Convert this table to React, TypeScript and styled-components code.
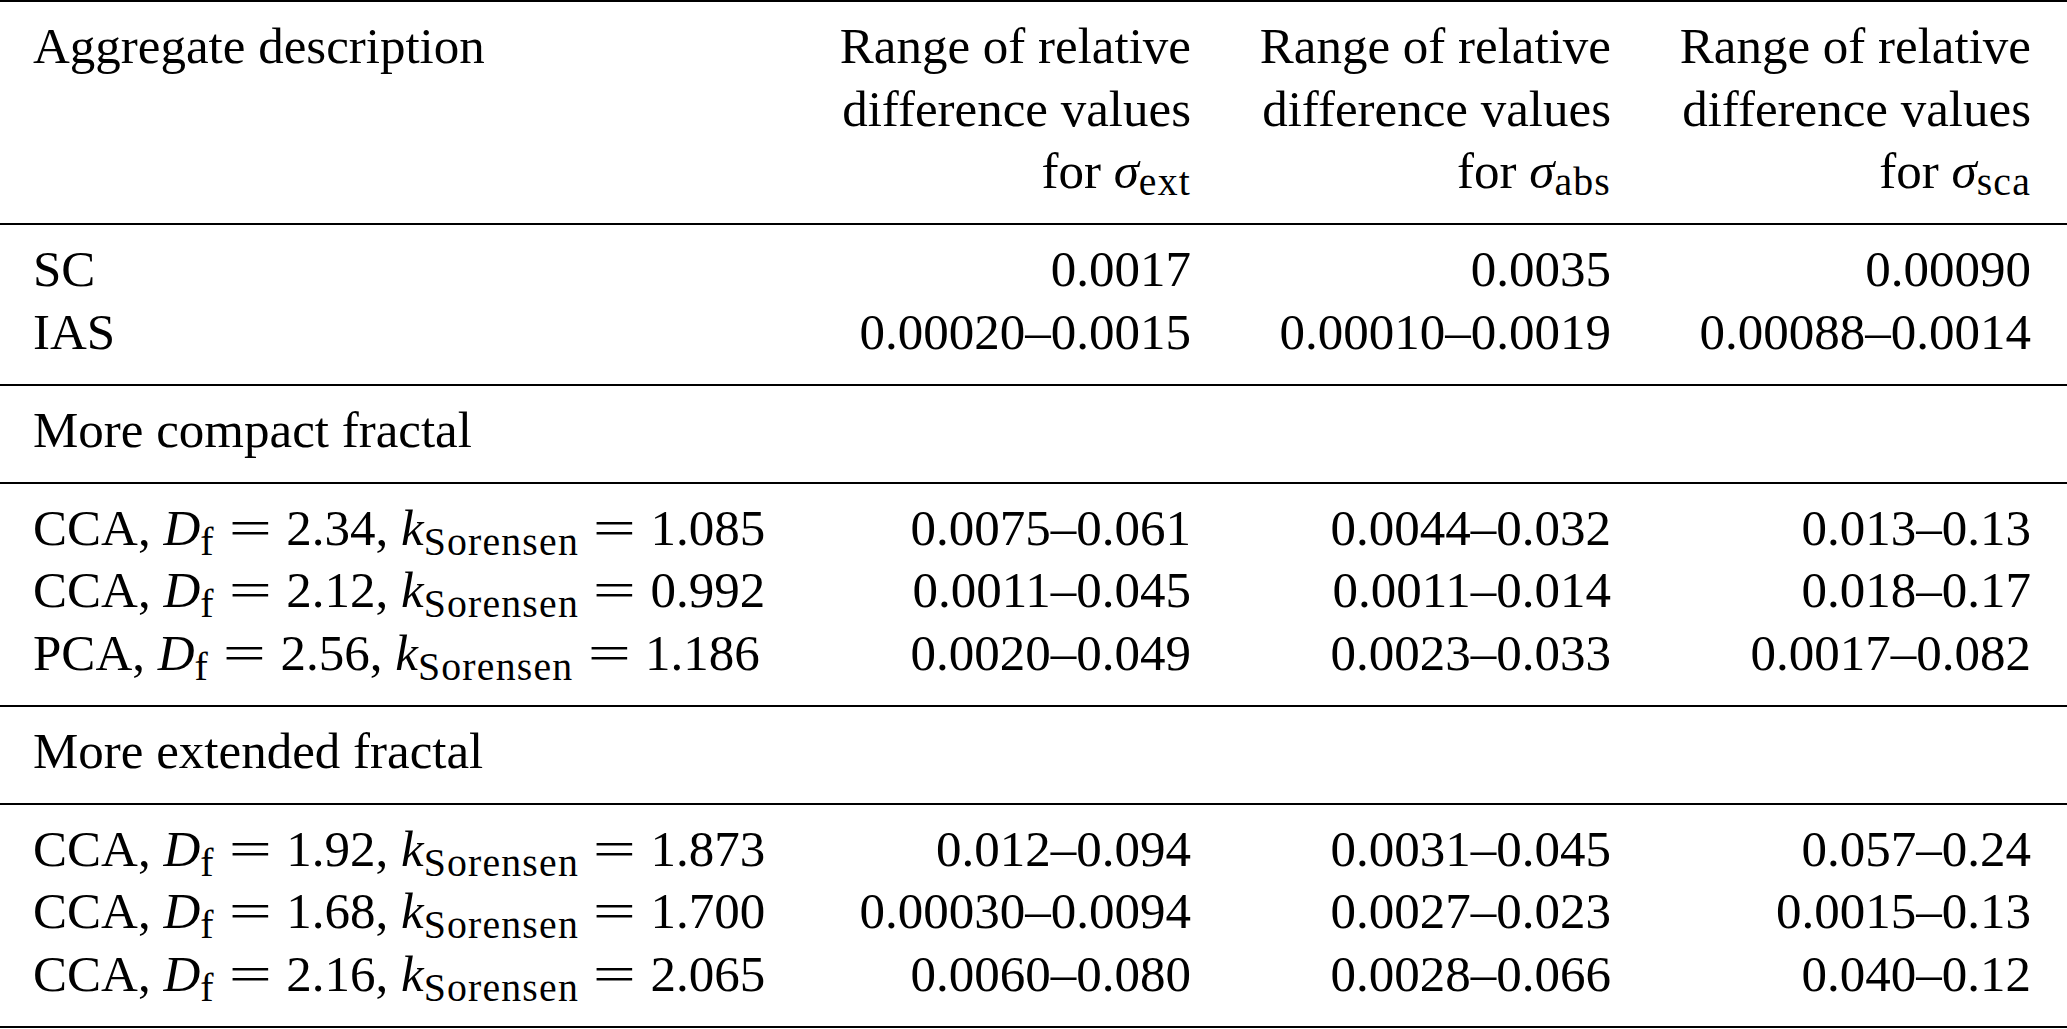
import styled, { createGlobalStyle } from "styled-components";

const GlobalStyle = createGlobalStyle`
  html, body {
    margin: 0;
    padding: 0;
    background: #fff;
  }
  body {
    font-family: "Liberation Serif", "Times New Roman", serif;
    color: #000;
  }
`;

const Table = styled.div`
  width: 2067px;
  border-top: 2px solid #000;
  font-size: 51px;
  line-height: 62.5px;
`;

const Section = styled.div`
  display: grid;
  grid-template-columns: 1fr 420px 420px 420px;
  padding: 13px 36px 20.5px 33px;
  border-bottom: 2px solid #000;
`;

const Cell = styled.div<{ $num?: boolean }>`
  text-align: ${(p) => (p.$num ? "right" : "left")};
  white-space: nowrap;
`;

const Label = styled.div`
  grid-column: 1 / -1;
  white-space: nowrap;
`;

const Line = styled.span`
  display: block;
`;

const I = styled.i`
  font-style: italic;
`;

const Sub = styled.span<{ $drop?: number }>`
  font-size: 0.78em;
  letter-spacing: 0.03em;
  line-height: 0;
  vertical-align: ${(p) => -(p.$drop ?? 10)}px;
`;

const Rel = styled.span`
  display: inline-block;
  margin: 0 0.42em;
  line-height: 1;
  transform: scaleX(1.5);
`;

type Row = {
  name: string;
  df: string;
  k: string;
  vals: [string, string, string];
};

const compact: Row[] = [
  { name: "CCA", df: "2.34", k: "1.085", vals: ["0.0075–0.061", "0.0044–0.032", "0.013–0.13"] },
  { name: "CCA", df: "2.12", k: "0.992", vals: ["0.0011–0.045", "0.0011–0.014", "0.018–0.17"] },
  { name: "PCA", df: "2.56", k: "1.186", vals: ["0.0020–0.049", "0.0023–0.033", "0.0017–0.082"] },
];

const extended: Row[] = [
  { name: "CCA", df: "1.92", k: "1.873", vals: ["0.012–0.094", "0.0031–0.045", "0.057–0.24"] },
  { name: "CCA", df: "1.68", k: "1.700", vals: ["0.00030–0.0094", "0.0027–0.023", "0.0015–0.13"] },
  { name: "CCA", df: "2.16", k: "2.065", vals: ["0.0060–0.080", "0.0028–0.066", "0.040–0.12"] },
];

function HeadCell({ sub }: { sub: string }) {
  return (
    <Cell $num>
      <Line>Range of relative</Line>
      <Line>difference values</Line>
      <Line>
        for <I>σ</I>
        <Sub $drop={7}>{sub}</Sub>
      </Line>
    </Cell>
  );
}

function FractalRows({ rows }: { rows: Row[] }) {
  return (
    <Section>
      {rows.map((r, i) => [
        <Cell key={`n${i}`}>
          {r.name}, <I>D</I>
          <Sub>f</Sub>
          <Rel>=</Rel>
          {r.df}, <I>k</I>
          <Sub>Sorensen</Sub>
          <Rel>=</Rel>
          {r.k}
        </Cell>,
        ...r.vals.map((v, j) => (
          <Cell $num key={`v${i}-${j}`}>
            {v}
          </Cell>
        )),
      ])}
    </Section>
  );
}

export default function App() {
  return (
    <>
      <GlobalStyle />
      <Table>
        <Section>
          <Cell>Aggregate description</Cell>
          <HeadCell sub="ext" />
          <HeadCell sub="abs" />
          <HeadCell sub="sca" />
        </Section>
        <Section>
          <Cell>SC</Cell>
          <Cell $num>0.0017</Cell>
          <Cell $num>0.0035</Cell>
          <Cell $num>0.00090</Cell>
          <Cell>IAS</Cell>
          <Cell $num>0.00020–0.0015</Cell>
          <Cell $num>0.00010–0.0019</Cell>
          <Cell $num>0.00088–0.0014</Cell>
        </Section>
        <Section>
          <Label>More compact fractal</Label>
        </Section>
        <FractalRows rows={compact} />
        <Section>
          <Label>More extended fractal</Label>
        </Section>
        <FractalRows rows={extended} />
      </Table>
    </>
  );
}
